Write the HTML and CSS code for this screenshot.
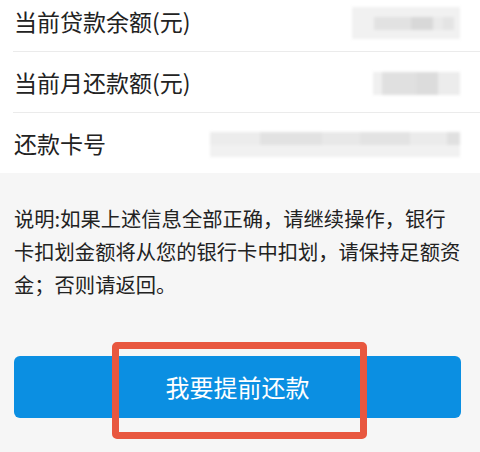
FILE: index.html
```html
<!DOCTYPE html>
<html lang="zh-CN">
<head>
<meta charset="utf-8">
<link rel="stylesheet" href="styles.css">
</head>
<body>
<div class="page">
  <div class="list">
    <div class="row">
      <span class="label">当前贷款余额(元)</span>
      <div class="mask mask-a"><i></i></div>
    </div>
    <div class="row">
      <span class="label">当前月还款额(元)</span>
      <div class="mask mask-b"><i></i></div>
    </div>
    <div class="row last">
      <span class="label">还款卡号</span>
      <div class="mask mask-c"><i></i></div>
    </div>
  </div>
  <p class="note">说明:如果上述信息全部正确，请继续操作，银行<br>卡扣划金额将从您的银行卡中扣划，请保持足额资<br>金；否则请返回。</p>
  <div class="actions">
    <button class="btn">我要提前还款</button>
  </div>
  <div class="highlight"></div>
</div>
</body>
</html>
```
FILE: styles.css
```css
html, body {
  margin: 0;
  padding: 0;
  background: #f6f6f6;
}
body {
  width: 480px;
  height: 452px;
  overflow: hidden;
  font-family: "Noto Sans CJK SC", "Noto Sans", sans-serif;
  color: #222;
}
.page {
  position: relative;
  height: 452px;
}
.list {
  background: #fff;
  margin-top: -9px;
  padding-left: 13px;
}
.row {
  height: 61px;
  display: flex;
  align-items: center;
  justify-content: space-between;
  border-bottom: 1px solid #ebebeb;
  padding-right: 20px;
  box-sizing: border-box;
}
.row.last {
  height: 60px;
  border-bottom: none;
}
.label {
  font-size: 23px;
  padding-left: 1px;
  letter-spacing: 0;
}
.mask {
  position: relative;
  filter: blur(1.5px);
}
.mask i {
  display: block;
  height: 100%;
}
.mask-a {
  width: 108px;
  height: 32px;
  margin-top: 4px;
  background: #f1f1f1;
}
.mask-a i {
  background: linear-gradient(90deg, transparent 0 20%, #e2e2e2 20% 55%, #d8d8d8 55% 75%, #eaeaea 75% 84%, #e4e4e4 84% 94%, transparent 94%);
  height: 40%;
  margin-top: 10px;
}
.mask-b {
  width: 87px;
  height: 23px;
  margin-top: 2px;
  background: #f0f0f0;
}
.mask-b i {
  background: linear-gradient(90deg, transparent 0 10%, #e0e0e0 10% 50%, #dcdcdc 50% 75%, #ececec 75%);
}
.mask-c {
  width: 250px;
  height: 25px;
  margin-top: 3px;
  background: #f1f1f1;
}
.mask-c i {
  background: linear-gradient(90deg, #ececec 0 20%, #e2e2e2 20% 45%, #e8e8e8 45% 60%, #e3e3e3 60% 80%, #ebebeb 80% 95%, #e0e0e0 95%);
  height: 50%;
}
.note {
  margin: 0;
  padding: 29px 0 0 14px;
  font-size: 20.3px;
  line-height: 33px;
  color: #222;
  white-space: nowrap;
}
.actions {
  padding: 55px 19px 0 14px;
}
.btn {
  display: flex;
  align-items: center;
  justify-content: center;
  width: 100%;
  height: 62px;
  border: none;
  border-radius: 6px;
  background: #0b8fe2;
  color: #fff;
  font-family: "Noto Sans CJK SC", "Noto Sans", sans-serif;
  font-size: 24px;
  padding: 0 0 2px 0;
}
.highlight {
  position: absolute;
  left: 112px;
  top: 351px;
  width: 255px;
  height: 97px;
  box-sizing: border-box;
  border: 7px solid #e8573f;
  border-radius: 5px;
}
```
